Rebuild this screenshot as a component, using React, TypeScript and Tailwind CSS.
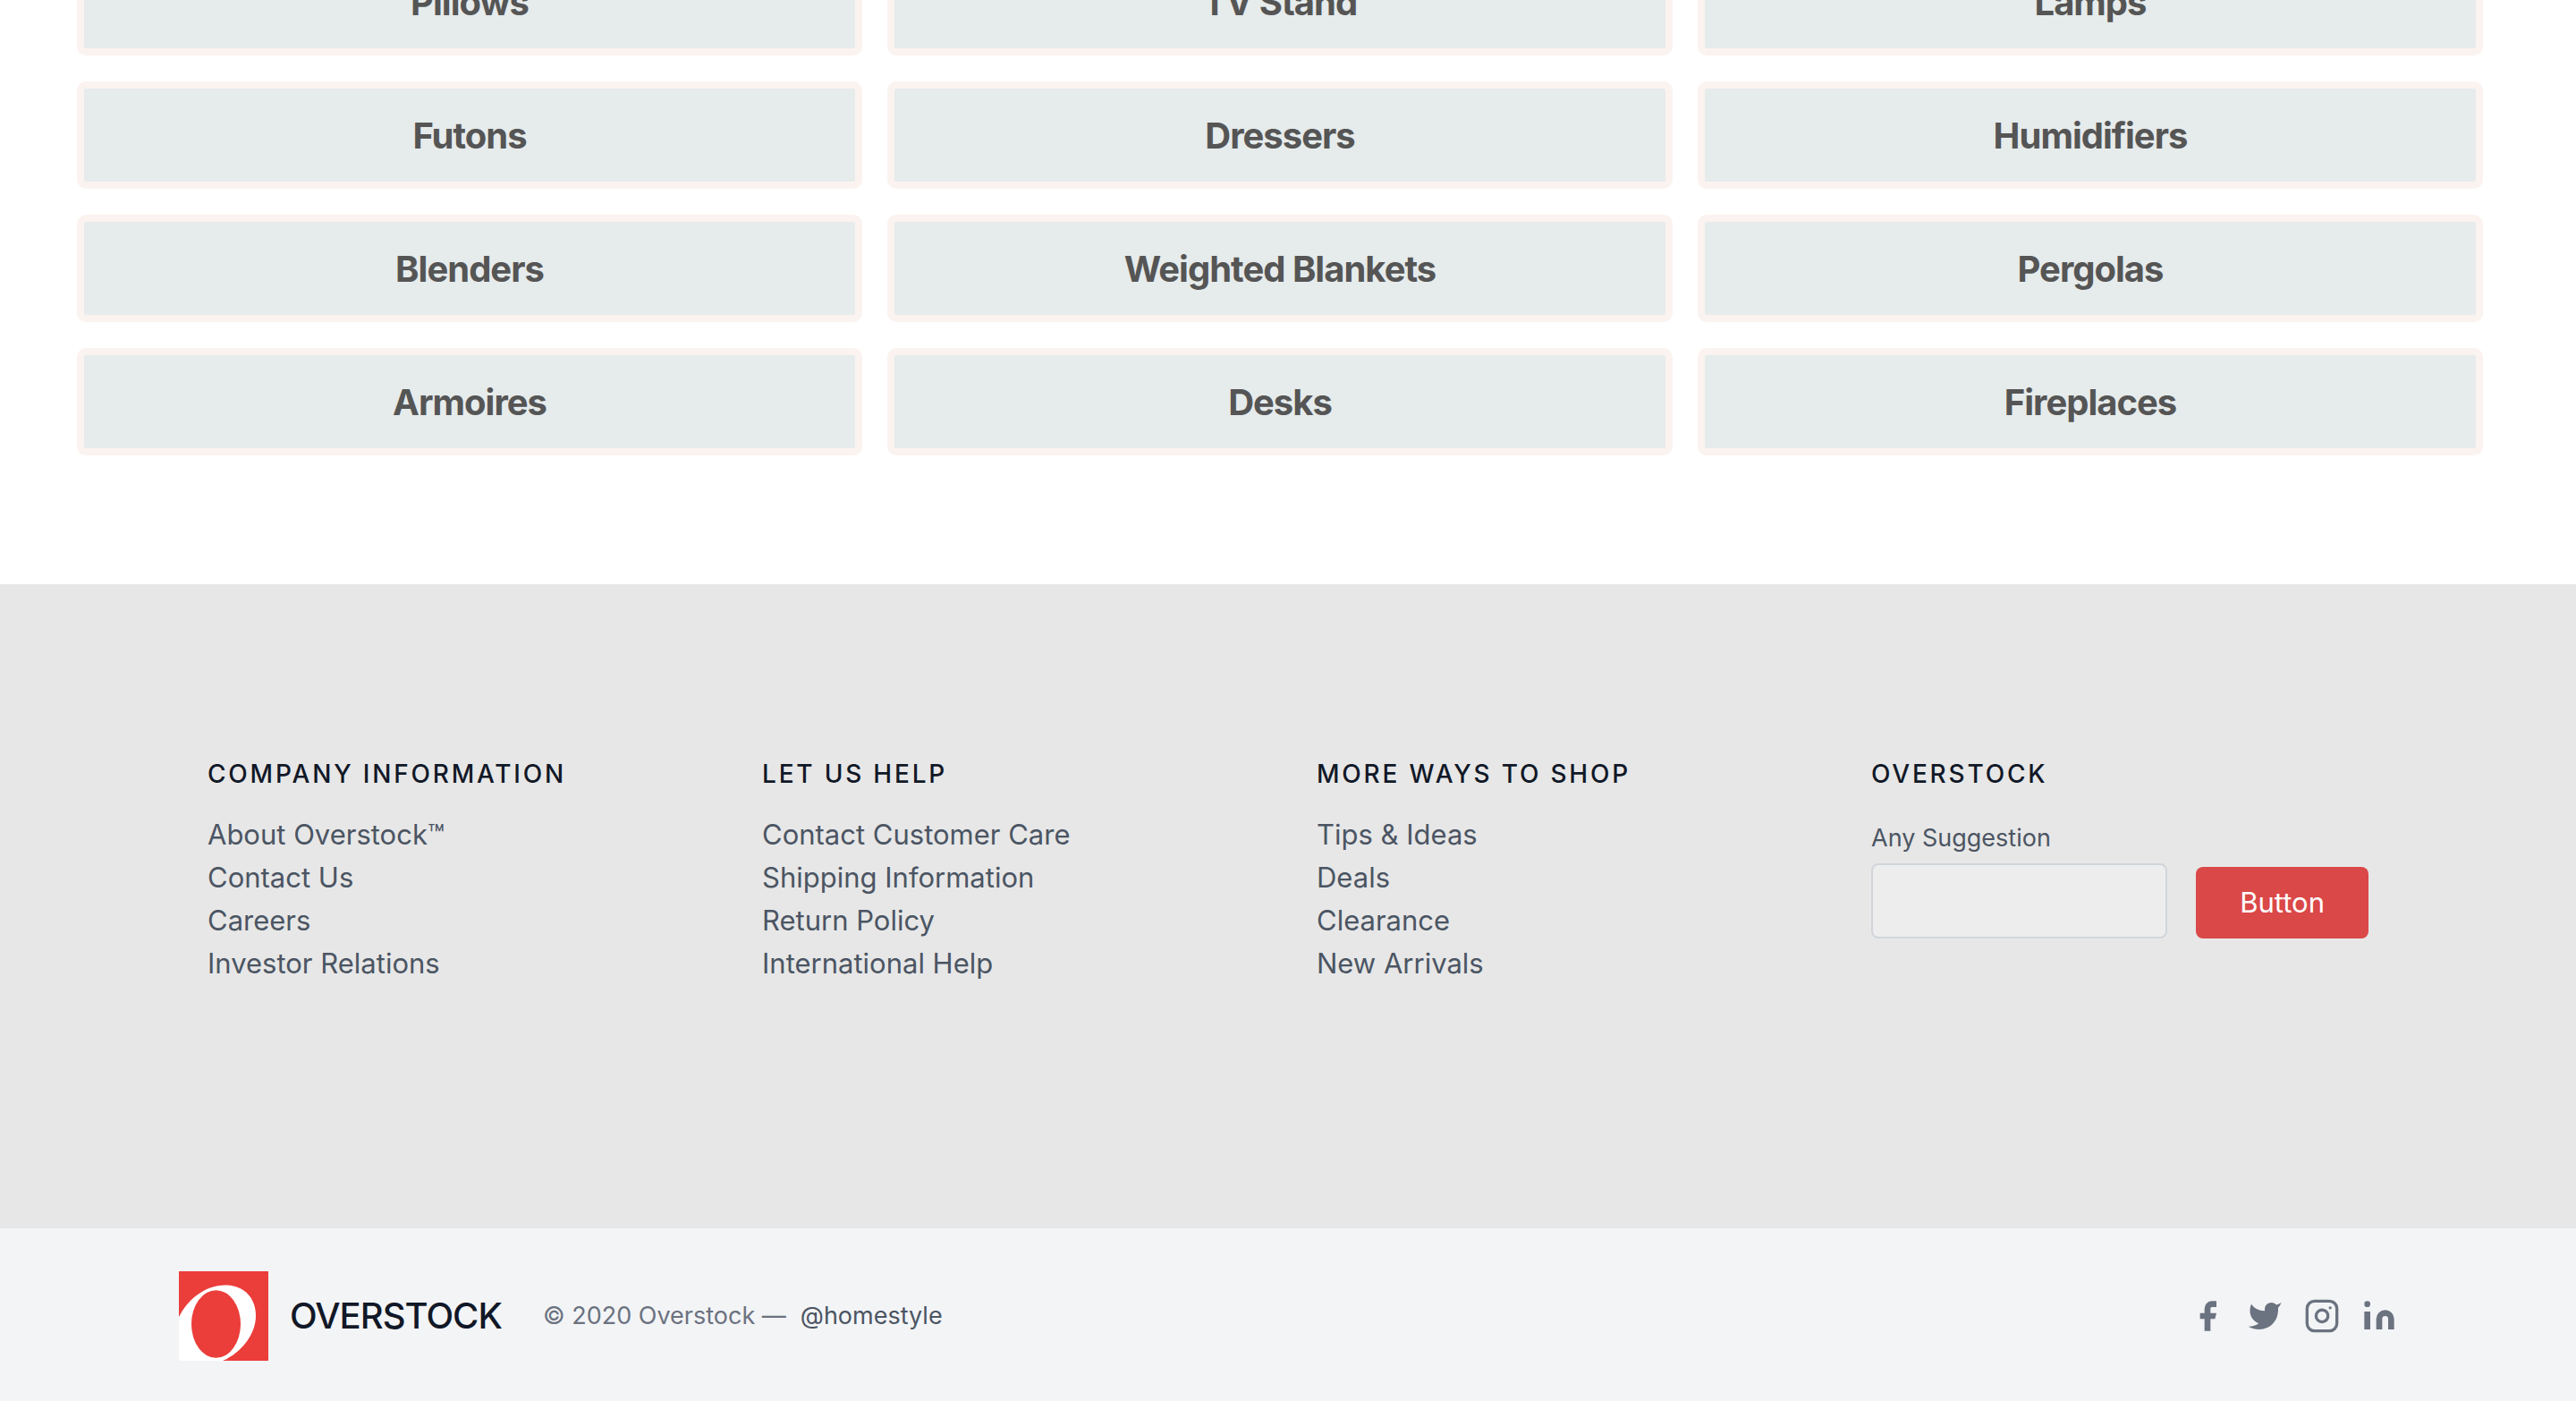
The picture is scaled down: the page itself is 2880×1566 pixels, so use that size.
const categories = [
  'Pillows',
  'TV Stand',
  'Lamps',
  'Futons',
  'Dressers',
  'Humidifiers',
  'Blenders',
  'Weighted Blankets',
  'Pergolas',
  'Armoires',
  'Desks',
  'Fireplaces',
];

const linkGroups = [
  {
    title: 'COMPANY INFORMATION',
    links: ['About Overstock™', 'Contact Us', 'Careers', 'Investor Relations'],
  },
  {
    title: 'LET US HELP',
    links: ['Contact Customer Care', 'Shipping Information', 'Return Policy', 'International Help'],
  },
  {
    title: 'MORE WAYS TO SHOP',
    links: ['Tips & Ideas', 'Deals', 'Clearance', 'New Arrivals'],
  },
];

function ColumnTitle({ children }: { children: string }) {
  return (
    <h2 className="mb-6 text-[28px] leading-10 font-medium tracking-widest text-[#111827]">{children}</h2>
  );
}

function CategoryGrid() {
  return (
    <section className="grid shrink-0 grid-cols-3 gap-x-7 gap-y-[29px] pr-[104px] pb-36 pl-[86px]">
      {categories.map((name) => (
        <a
          key={name}
          href="#"
          className="flex h-[120px] items-center justify-center rounded-[10px] border-8 border-[#fbf3f0] bg-[#e6ebeb] pt-0.5 text-[40px] leading-[48px] font-bold tracking-tight text-[#555555]"
        >
          {name}
        </a>
      ))}
    </section>
  );
}

function SuggestionForm() {
  return (
    <form className="flex items-end gap-8" onSubmit={(event) => event.preventDefault()}>
      <div className="min-w-0 flex-1">
        <label htmlFor="suggestion" className="block text-[27px] leading-[56px] text-[#4b5563]">
          Any Suggestion
        </label>
        <input
          id="suggestion"
          type="text"
          className="block h-[84px] w-full rounded-lg border-2 border-[#d1d5db] bg-[#ededed] px-6 text-[31px] text-[#374151] outline-none"
        />
      </div>
      <button type="submit" className="h-20 rounded-lg bg-[#da4848] px-[49px] text-[31px] leading-[48px] text-white">
        Button
      </button>
    </form>
  );
}

function Logo() {
  return (
    <svg viewBox="0 0 100 100" className="size-[100px]" aria-hidden="true">
      <rect width="100" height="100" fill="#eb3d39" />
      <path d="M0 51C9 33 28 15.500 52 15.500C72 15.500 86 29 86 50C86 70 70 91 49 100H0Z" fill="#ffffff" />
      <ellipse cx="41.500" cy="59" rx="27.500" ry="37.800" fill="#eb3d39" />
    </svg>
  );
}

function SocialLinks() {
  return (
    <div className="flex gap-6 text-[#6b7280]">
      <a href="#" aria-label="Facebook">
        <svg viewBox="0 0 24 24" className="size-10" fill="currentColor">
          <path d="M18 2h-3a5 5 0 00-5 5v3H7v4h3v8h4v-8h3l1-4h-4V7a1 1 0 011-1h3z" />
        </svg>
      </a>
      <a href="#" aria-label="Twitter">
        <svg viewBox="0 0 24 24" className="size-10" fill="currentColor">
          <path d="M23 3a10.900 10.900 0 01-3.140 1.530 4.480 4.480 0 00-7.860 3v1A10.660 10.660 0 013 4s-4 9 5 13a11.640 11.640 0 01-7 2c9 5 20 0 20-11.500a4.500 4.500 0 00-.080-.830A7.720 7.720 0 0023 3z" />
        </svg>
      </a>
      <a href="#" aria-label="Instagram">
        <svg
          viewBox="0 0 24 24"
          className="size-10"
          fill="none"
          stroke="currentColor"
          strokeWidth="2"
          strokeLinecap="round"
          strokeLinejoin="round"
        >
          <rect width="20" height="20" x="2" y="2" rx="5" ry="5" />
          <path d="M16 11.370A4 4 0 1112.630 8 4 4 0 0116 11.370zm1.500-4.870h.010" />
        </svg>
      </a>
      <a href="#" aria-label="LinkedIn">
        <svg viewBox="0 0 24 24" className="size-10" fill="currentColor">
          <path d="M16 8a6 6 0 016 6v7h-4v-7a2 2 0 00-2-2 2 2 0 00-2 2v7h-4v-7a6 6 0 016-6zM2 9h4v12H2z" />
          <circle cx="4" cy="4" r="2" />
        </svg>
      </a>
    </div>
  );
}

export default function App() {
  return (
    <div className="flex h-screen flex-col justify-end overflow-hidden bg-white font-['Inter',sans-serif]">
      <CategoryGrid />
      <footer className="shrink-0">
        <div className="bg-[#e7e7e7]">
          <div className="mx-auto grid max-w-[2560px] grid-cols-4 px-10 py-48">
            {linkGroups.map((group) => (
              <div key={group.title} className="px-8">
                <ColumnTitle>{group.title}</ColumnTitle>
                <ul className="mb-20">
                  {group.links.map((link) => (
                    <li key={link} className="text-[31px] leading-[48px] text-[#4b5563]">
                      <a href="#">{link}</a>
                    </li>
                  ))}
                </ul>
              </div>
            ))}
            <div className="px-8">
              <ColumnTitle>OVERSTOCK</ColumnTitle>
              <SuggestionForm />
            </div>
          </div>
        </div>
        <div className="bg-[#f3f4f6]">
          <div className="mx-auto flex max-w-[2560px] items-center px-10 pt-12 pb-[45px]">
            <a href="#" className="flex items-center gap-6 text-[40px] leading-[56px] font-medium tracking-tight text-[#111827]">
              <Logo />
              OVERSTOCK
            </a>
            <p className="ml-[46px] text-[27px] leading-10 text-[#6b7280]">
              © 2020 Overstock —
              <a href="#" className="ml-4 text-[#4b5563]">
                @homestyle
              </a>
            </p>
            <div className="ml-auto">
              <SocialLinks />
            </div>
          </div>
        </div>
      </footer>
    </div>
  );
}
